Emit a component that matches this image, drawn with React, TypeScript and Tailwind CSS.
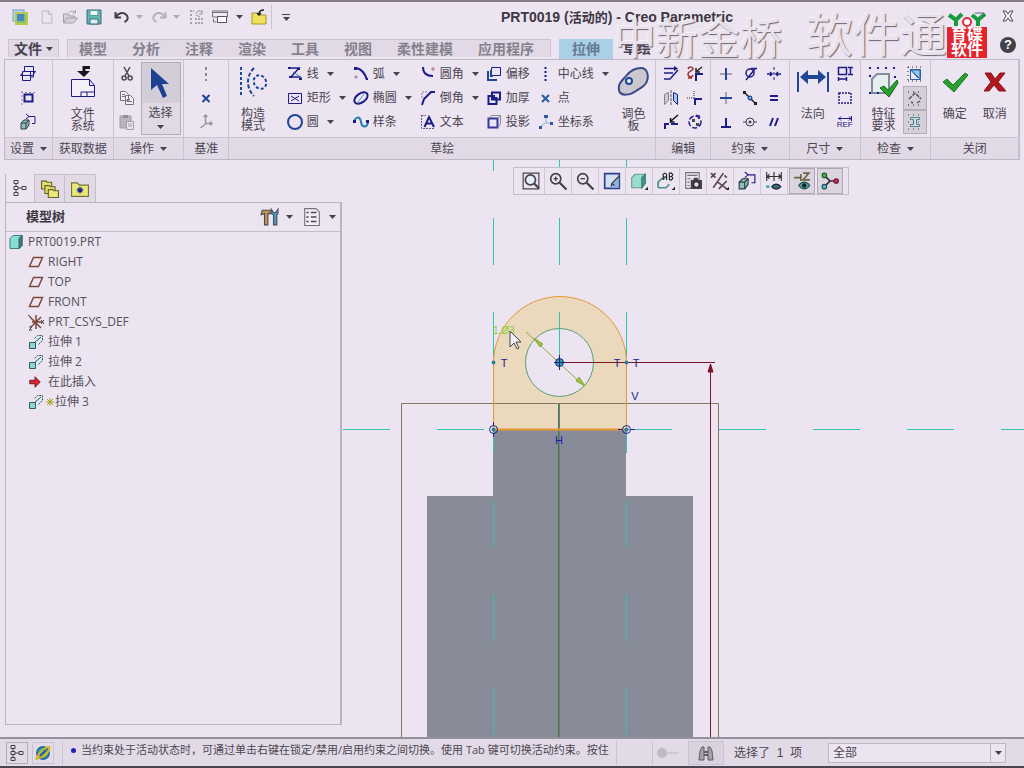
import React from "react";

const NAVY = "#1c1c86";
const BLUE = "#1f4796";

// Small line icons, all on a 16x16 grid
const icons: Record<string, React.ReactNode> = {
  app: (
    <>
      <rect x="1" y="1" width="11" height="11" fill="#b9d6ee" stroke="#6fa0c4" />
      <path d="M4 4h11v11H4z" fill="#7cc36a" stroke="#b9c94a" strokeWidth="2" />
      <path d="M5 5h7v7H5z" fill="#4a86c8" stroke="none" />
    </>
  ),
  newDoc: <path d="M2.500 1h7l4 4v10h-11zM9.500 1v4h4" stroke="#b9b3c0" />,
  open: (
    <>
      <path d="M1.500 14V5h5l1 2h5v2M1.500 14l3-5h11l-4 5z" fill="#d6d1da" stroke="#a49eab" />
      <path d="M7 3.500c2-2 4-2 6 0M13.500 1v3h-3" stroke="#a49eab" />
    </>
  ),
  save: (
    <>
      <path d="M1 1h14v14H1z" fill="#63b5ae" stroke="#3d6f7c" />
      <path d="M4 1.500h8v5H4z" fill="#e9f5f5" stroke="#5b9a9c" />
      <path d="M4 10h8v5H4z" fill="#dfeeee" stroke="#3d6f7c" />
    </>
  ),
  undo: <path d="M1.500 3v5.500h5.500M2 8c2-4 7-5 10-2.500s2 6-1.500 7.500" stroke="#3f3b49" strokeWidth="2" />,
  redo: <path d="M14.500 3v5.500H9M14 8C12 4 7 3 4 5.500s-2 6 1.500 7.500" stroke="#b5afbc" strokeWidth="2" />,
  regen: (
    <>
      <path d="M2 2h4M2 6h3M2 10h3M2 14h3M7 10h8M7 14h8" stroke="#aaa4b2" strokeWidth="2" strokeDasharray="2 1" />
      <path d="M8 5c1-4 5-4 6-1M14 1v4h-3M8 6l4 2" stroke="#9a94a2" />
    </>
  ),
  windows: (
    <>
      <path d="M.500 2h15v6h-15zM.500 3.500h15" fill="#efe9f2" stroke="#77727f" />
      <path d="M5.500 7.500h9v6h-9z" fill="#fff" stroke="#55505f" />
      <path d="M1.500 10v3h3" stroke="#77727f" />
    </>
  ),
  closeFolder: (
    <>
      <path d="M1 15V4h5l1 2h8v9z" fill="#efe05e" stroke="#a3952f" />
      <path d="M8 5c0-3 2-4 5-4M6 4l2 2 2-2" stroke="#222" strokeWidth="1.500" />
    </>
  ),
  plane: (
    <path d="M4.500 5V.500h9V11h-3M2.500 5.500h8v9h-8zM.500 9.500l3-4h12l-3 4z" />
  ),
  refFrame: (
    <>
      <path d="M4.500 4.500h8v7h-8z" strokeWidth="2" />
      <path d="M2 1v14M1 2.500h14" stroke="#85808e" strokeDasharray="2 2" />
    </>
  ),
  sketchView: (
    <>
      <path d="M8 2.500h7v7h-3M6 5l3-2.500L6 0M12 9.500h3" />
      <path d="M1 9l3-3h5v5l-3 4H1z" fill="#8fc0b8" stroke="#2b3d48" />
      <path d="M1 9h5v6M6 9l3-3" stroke="#2b3d48" />
    </>
  ),
  cut: <path d="M5 1l5 9M11 1L6 10M5 10a2 2 0 1 0 .1 4 2 2 0 0 0 0-4M11 10a2 2 0 1 0 .1 4 2 2 0 0 0 0-4" stroke="#4a4653" strokeWidth="1.500" />,
  copy: (
    <path d="M1.500 1.500h5l3 3v6h-8zM6.500 5.500h5l3 3v6h-8zM3 4.500h3M3 6.500h3M8 9.500h3M8 11.500h5" fill="#f3eef6" stroke="#77727f" />
  ),
  paste: (
    <>
      <path d="M1 2h11v12H1z" fill="#bab4c0" stroke="#a29ca9" />
      <path d="M4 1h5v3H4z" fill="#918b98" stroke="none" />
      <path d="M7.500 7.500h7v8h-7zM9 10h4M9 12h4" fill="#eae5ee" stroke="#a29ca9" />
    </>
  ),
  datumAxis: <path d="M8 1v14" stroke="#8d8896" strokeWidth="2" strokeDasharray="3 3" />,
  datumPoint: <path d="M4.500 5l7 7M11.500 5l-7 7" stroke={BLUE} strokeWidth="2" />,
  datumCsys: <path d="M7.500 1v9l-5 4M7.500 9.500H14M5.500 3l2-2 2 2M12 7.500l2 2-2 2" stroke="#9b95a3" strokeWidth="1.500" />,
  line: (
    <>
      <path d="M2 2h10L4 11h10" strokeWidth="1.500" />
      <path d="M1 1h3v2H1zM10 2h3v2h-3zM2 10h3v2H2zM12 12h3v2h-3z" fill={NAVY} stroke="none" />
      <path d="M6 6l9 6" stroke="#4b74b4" />
    </>
  ),
  rect: <path d="M1.500 3.500h13v10h-13zM4 6l8 5M12 6l-8 5" />,
  circle: <circle cx="8" cy="8" r="7" stroke={BLUE} strokeWidth="2" />,
  arc: (
    <>
      <path d="M3 2c6 1 9 5 11 12" strokeWidth="2" />
      <path d="M1 1h3v3H1zM13 12h2v2h-2z" fill={NAVY} stroke="none" />
      <path d="M1 11h4M3 9v4" stroke="#8d8896" />
    </>
  ),
  ellipse: (
    <>
      <ellipse cx="8" cy="8" rx="7.500" ry="4.500" transform="rotate(-35 8 8)" strokeWidth="2" />
      <path d="M5 12l6-8" stroke="#39a9cf" />
    </>
  ),
  spline: (
    <>
      <path d="M1 9c1-7 6-7 7-1s6 6 7 0" stroke="#217ea8" strokeWidth="2" />
      <path d="M0 6h3v3H0zM13 6h3v3h-3z" fill={NAVY} stroke="none" />
    </>
  ),
  fillet: (
    <>
      <path d="M3 1c0 6 3 9 10 9" strokeWidth="2" />
      <path d="M11 3h4M13 1v4" stroke="#b3707a" />
    </>
  ),
  chamfer: (
    <>
      <path d="M2 15l2-6 7-7h4" strokeWidth="2" />
      <path d="M2 8V2h6" stroke="#918b99" strokeDasharray="2 1" />
    </>
  ),
  textTool: (
    <>
      <path d="M4.500 13L9 3l5 10M6.500 9.500h5" strokeWidth="2" />
      <path d="M1.500 1v13.500H15M1.500 1.500H6" stroke="#605b87" strokeDasharray="2 1" />
    </>
  ),
  offset: (
    <>
      <path d="M5.500 1.500h9v8h-9z" />
      <path d="M2 5v9h9M5 4v6h2" stroke={BLUE} strokeWidth="2" />
    </>
  ),
  thicken: (
    <>
      <path d="M6 2.500h8v7H6z" strokeWidth="2" />
      <path d="M2.500 6v8h8V8H8V6z" strokeWidth="2" />
    </>
  ),
  project: (
    <>
      <path d="M2.500 4.500h9v9h-9z" strokeWidth="2" stroke="#35359a" />
      <path d="M2.500 4.500l3-3h9v9l-3 3M11.500 4.500l3-3" stroke="#8d8896" />
    </>
  ),
  centerline: <path d="M7.500 1v14" strokeWidth="2" strokeDasharray="2 2" />,
  point: <path d="M4 5l7 7M11 5l-7 7" stroke="#1e5f9d" strokeWidth="2" />,
  csys: (
    <>
      <path d="M8 2v7M7 9l-5 4M8 9h6" stroke="#8eb5d2" />
      <path d="M6 1h4v3H6zM1 12h3v3H1zM12 8h3v3h-3z" fill="#35579f" stroke="none" />
    </>
  ),
  modify: (
    <>
      <path d="M1 2.500h11M1 7h9M1 13h6l8-9" strokeWidth="1.500" />
      <path d="M11 0l4 2.500-4 2.500" fill={NAVY} stroke="none" />
    </>
  ),
  deleteSeg: (
    <>
      <path d="M1 3c1-3 5-2 5 0S1 5 1 8s4 4 5 1M1 12h4" stroke="#a02f2f" strokeWidth="1.500" />
      <path d="M9 15V8h7" strokeWidth="2" />
      <path d="M15 1l-5 4M9 2v4h4" stroke="#222" strokeWidth="1.500" />
    </>
  ),
  mirror: (
    <>
      <path d="M1.500 4.500l4-2v8l-4 4z" fill="#cfcad5" stroke="#85808e" />
      <path d="M8 0v16" stroke="#555" strokeDasharray="3 1" />
      <path d="M14.500 4.500l-4-2v8l4 4z" fill="#9fd0e6" stroke={NAVY} />
    </>
  ),
  corner: (
    <>
      <path d="M15 9H8v6" strokeWidth="2" />
      <path d="M7 1v7M0 8h7" stroke="#8d8896" strokeWidth="2" strokeDasharray="1 1" />
    </>
  ),
  divide: (
    <>
      <path d="M2 15v-5h4M8 10h7" strokeWidth="2" />
      <path d="M15 1L8 7M7.500 4v4h4" stroke="#111" strokeWidth="1.500" />
    </>
  ),
  rotateResize: (
    <>
      <circle cx="8" cy="8" r="6" strokeDasharray="5 2" strokeWidth="1.500" />
      <path d="M5 5h3v3H5zM9 9h3v3H9z" fill="#4a4653" stroke="none" />
      <path d="M9 1l4 1-2 3" />
    </>
  ),
  vertical: (
    <>
      <path d="M2 8h12" stroke="#a8a2b0" strokeWidth="2" />
      <path d="M8 2v12" stroke={BLUE} strokeWidth="2" />
    </>
  ),
  horizontal: (
    <>
      <path d="M8 2v12" stroke="#a8a2b0" strokeWidth="2" />
      <path d="M2 8h12" stroke={BLUE} strokeWidth="2" />
    </>
  ),
  perpendicular: <path d="M3 13h10M8 4v9" strokeWidth="2" />,
  tangent: (
    <>
      <circle cx="8" cy="7" r="4" strokeWidth="1.500" />
      <path d="M4 14L13 3M9 2.500h6" strokeWidth="1.500" />
    </>
  ),
  midpoint: (
    <>
      <path d="M2 2l12 12" stroke="#222" strokeWidth="1.500" />
      <path d="M1 1h3v3H1zM12 12h3v3h-3z" fill="#222" stroke="none" />
      <circle cx="8" cy="8" r="2" fill="#49c0d8" />
    </>
  ),
  coincident: (
    <>
      <circle cx="8" cy="8" r="4" stroke="#3a3a60" />
      <path d="M1 8h3M12 8h3" stroke="#3a3a60" />
      <circle cx="8" cy="8" r="1" fill="#333" stroke="#333" />
    </>
  ),
  symmetric: (
    <>
      <path d="M8 1v14" strokeDasharray="3 2" />
      <path d="M1 8h5M15 8h-5M4 6l2 2-2 2M12 6l-2 2 2 2" strokeWidth="1.500" />
    </>
  ),
  equal: <path d="M4 6h8M4 10h8" strokeWidth="2" />,
  parallel: <path d="M4 12l3-8M9 12l3-8" strokeWidth="2" />,
  perimeter: (
    <>
      <path d="M1.500 1.500h8v7h-8z" strokeWidth="1.500" />
      <path d="M11 1.500h5M11 8.500h5M13.500 2v6M1.500 11v4M9.500 11v4M2 13h7" strokeWidth="1.500" />
    </>
  ),
  baseline: <path d="M2 3h12v10H2z" strokeDasharray="2 1" strokeWidth="1.500" />,
  showDims: (
    <>
      <path d="M3 3l8 9M3.500 13.500h10v-10h-10z" stroke="#2c5fa0" />
      <path d="M4 4h9v9z" fill="#8fc7ea" stroke="#2c5fa0" />
      <path d="M1 1v14M1 1h14M1 15h14" stroke="#222" strokeDasharray="1 3" />
    </>
  ),
  openEnds: (
    <>
      <path d="M2 9l6-6 6 6M4 12l2 1M10 13l3-2" stroke="#55505f" strokeWidth="1.500" strokeDasharray="4 1" />
      <path d="M1 2h14M1 15h14" stroke="#222" strokeDasharray="1 4" />
    </>
  ),
  overlap: (
    <>
      <path d="M3.500 3.500h9v2h-3v5h3v2h-9v-2h3v-5h-3z" fill="#cfe3e4" stroke="#52808c" />
      <path d="M1 1h14M1 15h14M1 8h14" stroke="#444" strokeDasharray="1 4" />
    </>
  ),
  tree: (
    <path d="M2 .500h4v3H2zM2 6.500h4v3H2zM2 12.500h4v3H2zM10 6.500h4v3h-4zM4 3.500v3M4 9.500v3M6 8h4" stroke="#44404c" />
  ),
  folders: (
    <>
      <path d="M.500 8V1h4l1 1h4v6z" fill="#e4e06c" stroke="#67622c" />
      <path d="M3.500 12V5h4l1 1h4v6z" fill="#e4e06c" stroke="#67622c" />
      <path d="M6.500 15.500v-7h4l1 1h4v6z" fill="#ece978" stroke="#67622c" />
    </>
  ),
  favorites: (
    <>
      <path d="M.500 14.500v-12h5l2 2h8v10z" fill="#ebe87a" stroke="#77723a" />
      <path d="M8 6v6M5 9h6M6 7l4 4M10 7l-4 4" stroke="#1b1b88" />
    </>
  ),
  tools: (
    <>
      <path d="M2 2h7v3H7v10H4V5L1 6z" fill="#c9925d" stroke="#4a4a4a" />
      <path d="M10 1v4l2 1v9h3V6l1-1V1l-2 3h-2z" fill="#4f93c3" stroke="#4a5560" />
    </>
  ),
  list: (
    <>
      <path d="M1.500 .500h10l3 3v12h-13z" fill="#f2edf4" stroke="#77727f" />
      <path d="M3 4h2M3 8h2M3 12h2M7 4h5M7 8h5M7 12h5" stroke="#4b4753" strokeWidth="1.500" />
    </>
  ),
  part: (
    <>
      <path d="M2 4.500l3-3h9v10l-3 3H2z" fill="#86ded4" stroke="#3c7f7d" />
      <path d="M11 4.500l3-3v10l-3 3z" fill="#3e7f82" stroke="#2f5d63" />
    </>
  ),
  datumPlane: <path d="M1.500 12.500l4-9h9l-4 9z" stroke="#7c4a3d" strokeWidth="1.500" />,
  csysTree: (
    <>
      <path d="M8 1v14M2 3l11 11M13 3L3 13M4 8h11" stroke="#7c4a3d" strokeWidth="1.500" />
      <path d="M0 1l3 2M13 6l3 4M16 6l-3 4M1 13h3l-3 3h3" stroke="#444" />
    </>
  ),
  extrude: (
    <>
      <path d="M6.500 4.500l3-3h5v5l-4 4" fill="#d5edf2" stroke="#3a4654" strokeDasharray="2 1" />
      <path d="M1.500 8.500h6v6h-6z" fill="#8cd7d3" stroke="#2d5c63" />
      <path d="M6 9l7-6" stroke="#3a4654" />
    </>
  ),
  insert: <path d="M2 6h6V2l6 6-6 6v-4H2z" fill="#e0232f" stroke="#5b1720" />,
  refit: (
    <>
      <path d="M1 1h14v14H1z" stroke="#44404c" />
      <circle cx="7.500" cy="7" r="4.500" fill="#e3eef6" stroke="#44404c" strokeWidth="1.500" />
      <path d="M11 10.500l4 4" stroke="#44404c" strokeWidth="2" />
    </>
  ),
  zoomIn: (
    <>
      <circle cx="6" cy="6" r="4.500" stroke="#44404c" strokeWidth="1.500" />
      <path d="M9.500 9.500l6 6" stroke="#44404c" strokeWidth="2" />
      <path d="M4 6h4M6 4v4" stroke="#26222e" />
    </>
  ),
  zoomOut: (
    <>
      <circle cx="6" cy="6" r="4.500" stroke="#44404c" strokeWidth="1.500" />
      <path d="M9.500 9.500l6 6" stroke="#44404c" strokeWidth="2" />
      <path d="M4 6h4" stroke="#26222e" />
    </>
  ),
  repaint: (
    <>
      <path d="M1.500 1.500h13v13h-13z" fill="#cfe0f0" stroke="#2f3f8d" strokeWidth="1.500" />
      <path d="M7 14l1-3 6-6v9z" fill="#8fb2dc" stroke="none" />
      <path d="M7 13l1-3 6-6M8 10l2 2" stroke="#333" />
    </>
  ),
  display: (
    <>
      <path d="M1.500 5l3-3h9v8l-3 4h-9z" fill="#9adccd" stroke="#6a9c98" />
      <path d="M10.500 5l3-3v8l-3 4z" fill="#3f9c8e" stroke="#3b7b78" />
      <path d="M16 13v3h-3z" fill="#222" stroke="none" />
    </>
  ),
  savedViews: (
    <>
      <path d="M1 14V9l3-3h3M1 14h7l3-3" stroke="#4d8f8c" strokeWidth="1.500" />
      <path d="M5.500 7V2l1.500-1 1.500 1v5M5.500 4.500h3M11 7V1h2l1 1.500-1 1.500h-2M13 4l1 1.500L13 7h-2" stroke="#222" />
      <path d="M16 13v3h-3z" fill="#222" stroke="none" />
    </>
  ),
  viewManager: (
    <>
      <path d="M1.500 .500h12v14h-12zM3 3h9M3 6h3M3 9h2M3 12h2" stroke="#77727f" />
      <path d="M6 7h2l1-2h3l1 2h3v8H6z" fill="#44404c" stroke="none" />
      <circle cx="11" cy="11" r="2.500" fill="#ddd" stroke="#222" />
    </>
  ),
  datumFilter: (
    <>
      <path d="M0 1l4 4M4 1L0 5M2 14L11 1M6 9l8 6M14 8l-7 7M12 3l2 2" stroke="#5b4550" strokeWidth="1.500" />
      <path d="M16 13v3h-3z" fill="#222" stroke="none" />
    </>
  ),
  dimFilter: (
    <>
      <path d="M1.500 0v8M8 0v8M14.500 0v8M2 4h12M4 2L2 4l2 2M12 2l2 2-2 2" stroke="#333" />
      <path d="M1 13h3" stroke="#2fa3b4" strokeWidth="2" />
      <path d="M6 13c2-3 6-3 8 0-2 3-6 3-8 0z" fill="#2f6f78" stroke="#223" />
    </>
  ),
  annotations: (
    <>
      <path d="M1 5h6M9 1h5L9 7h6M7 2v6" stroke="#6c6544" strokeWidth="1.500" />
      <path d="M5 12c3-4 7-4 10 0-3 4-7 4-10 0z" fill="#58a49b" stroke="#24524f" />
      <circle cx="10" cy="12" r="2" fill="#123" stroke="none" />
    </>
  ),
  spin: (
    <>
      <path d="M3 3l5 5-5 5M8 8h6" stroke="#333" strokeWidth="1.500" />
      <circle cx="3" cy="3" r="2" fill="#3dbb4a" stroke="#1d5b25" />
      <circle cx="3" cy="13" r="2" fill="#4fc4d8" stroke="#1d4b5b" />
      <circle cx="13.500" cy="8" r="2" fill="#d22f5a" stroke="#6b1230" />
    </>
  ),
  browser: (
    <>
      <circle cx="8" cy="8" r="6" fill="#3fae7b" stroke="#2a6aa8" strokeWidth="2" />
      <path d="M3 13c-4 4 0-4 5-8s8-4 6 0-6 7-11 8z" fill="none" stroke="#d8b72c" strokeWidth="2" />
      <path d="M5 11l6-6" stroke="#2358b0" strokeWidth="2" />
    </>
  ),
  binoculars: (
    <>
      <path d="M1 15l1-9 2-4h2v13zM15 15l-1-9-2-4h-2v13z" fill="#a7a1ad" stroke="#5f5a66" />
      <path d="M6 7h4M6 10h4" stroke="#5f5a66" strokeWidth="2" />
    </>
  ),
};

const sizes = {
  sm: "h-3.5 w-3.5",
  md: "h-4 w-4",
  lg: "h-[18px] w-[18px]",
};

const Icon = ({ name, size = "md" }: { name: string; size?: "sm" | "md" | "lg" }) => (
  <svg
    viewBox="0 0 16 16"
    fill="none"
    stroke={NAVY}
    className={`${sizes[size]} shrink-0 overflow-visible`}
    aria-hidden="true"
  >
    {icons[name]}
  </svg>
);

const Caret = ({ light = false }: { light?: boolean }) => (
  <svg viewBox="0 0 7 4" className="h-1 w-[7px] shrink-0" aria-hidden="true">
    <path d="M0 0h7L3.500 4z" fill={light ? "#b0aab8" : "#45404d"} />
  </svg>
);

const IconButton = ({ name, label }: { name: string; label: string }) => (
  <button aria-label={label} className="flex h-6 items-center justify-center">
    <Icon name={name} />
  </button>
);

const IconColumn = ({ items, width }: { items: string[]; width: string }) => (
  <div className={`flex flex-col pt-0.5 ${width}`}>
    {items.map((name) => (
      <IconButton key={name} name={name} label={name} />
    ))}
  </div>
);

const BigButton = ({
  lines,
  children,
  width,
}: {
  lines: string[];
  children: React.ReactNode;
  width: string;
}) => (
  <button className={`flex flex-col items-center pt-1.5 leading-3 ${width}`}>
    <svg viewBox="0 0 32 32" fill="none" stroke={NAVY} className="mb-2.5 h-8 w-8" aria-hidden="true">
      {children}
    </svg>
    {lines.map((line) => (
      <span key={line}>{line}</span>
    ))}
  </button>
);

const Group = ({
  title,
  menu = false,
  width,
  children,
}: {
  title: string;
  menu?: boolean;
  width: string;
  children: React.ReactNode;
}) => (
  <section className={`flex flex-col border-r border-[#cbc3d1] ${width}`}>
    <div className="flex h-[77px] justify-center">{children}</div>
    <div className="flex h-[22px] items-center justify-center gap-1.5 border-t border-[#cbc3d1] bg-[#e1dae6]">
      {title}
      {menu && <Caret />}
    </div>
  </section>
);

const sketchTools = [
  {
    width: "w-[66px]",
    tools: [
      { icon: "line", label: "线", menu: true },
      { icon: "rect", label: "矩形", menu: true },
      { icon: "circle", label: "圆", menu: true },
    ],
  },
  {
    width: "w-[67px]",
    tools: [
      { icon: "arc", label: "弧", menu: true },
      { icon: "ellipse", label: "椭圆", menu: true },
      { icon: "spline", label: "样条" },
    ],
  },
  {
    width: "w-[66px]",
    tools: [
      { icon: "fillet", label: "圆角", menu: true },
      { icon: "chamfer", label: "倒角", menu: true },
      { icon: "textTool", label: "文本" },
    ],
  },
  {
    width: "w-[52px]",
    tools: [
      { icon: "offset", label: "偏移" },
      { icon: "thicken", label: "加厚" },
      { icon: "project", label: "投影" },
    ],
  },
  {
    width: "w-[74px]",
    tools: [
      { icon: "centerline", label: "中心线", menu: true },
      { icon: "point", label: "点" },
      { icon: "csys", label: "坐标系" },
    ],
  },
];

const tabs = ["模型", "分析", "注释", "渲染", "工具", "视图", "柔性建模", "应用程序"];

const treeItems = [
  { icon: "datumPlane", label: "RIGHT" },
  { icon: "datumPlane", label: "TOP" },
  { icon: "datumPlane", label: "FRONT" },
  { icon: "csysTree", label: "PRT_CSYS_DEF" },
  { icon: "extrude", label: "拉伸 1" },
  { icon: "extrude", label: "拉伸 2" },
  { icon: "insert", label: "在此插入" },
  { icon: "extrude", label: "拉伸 3", pending: true },
];

const viewTools = [
  "refit",
  "zoomIn",
  "zoomOut",
  "repaint",
  "display",
  "savedViews",
  "viewManager",
  "datumFilter",
  "sketchView",
  "dimFilter",
  "annotations",
  "spin",
];

const TitleBar = () => (
  <header className="relative flex h-[39px] items-start border-t-2 border-[#85798a] pl-3 pt-[7px]">
    <div className="flex h-4 items-center">
      <Icon name="app" />
      <div className="ml-3 flex items-center gap-2">
        <button aria-label="新建" className="flex"><Icon name="newDoc" size="sm" /></button>
        <button aria-label="打开" className="flex"><Icon name="open" /></button>
        <button aria-label="保存" className="flex"><Icon name="save" /></button>
        <button aria-label="撤消" className="ml-1 flex items-center gap-1.5"><Icon name="undo" /><Caret light /></button>
        <button aria-label="重做" className="flex items-center gap-1.5"><Icon name="redo" /><Caret light /></button>
        <button aria-label="重新生成" className="flex"><Icon name="regen" /></button>
        <button aria-label="窗口" className="flex items-center gap-2"><Icon name="windows" /><Caret /></button>
        <button aria-label="关闭文件" className="flex"><Icon name="closeFolder" /></button>
      </div>
      <div className="ml-1 h-6 border-l border-[#cbc3d1]" />
      <button aria-label="自定义" className="ml-2.5 flex flex-col items-center gap-0.5">
        <span className="w-2 border-t border-[#45404d]" />
        <Caret />
      </button>
    </div>
    <h1 className="ml-auto mr-[291px] whitespace-nowrap text-[14px] font-bold leading-4 text-[#3c3743]">
      PRT0019 (<span className="text-[13px]">活动的</span>) - Creo Parametric
    </h1>
    <button aria-label="关闭" className="absolute right-2.5 top-2">
      <svg viewBox="0 0 12 12" className="h-3 w-3" fill="#f3eef5" stroke="#55505d">
        <path d="M1 1h3l2 3 2-3h3L8 6l3 5H8L6 8l-2 3H1l3-5z" />
      </svg>
    </button>
    <button
      aria-label="帮助"
      className="absolute right-2 top-[35px] h-4 w-4 rounded-full bg-[#44404a] text-[13px] font-bold leading-4 text-white"
    >
      ?
    </button>
  </header>
);

// Embossed overlay with the vendor stamp, sits over title bar and tabs
const Watermark = () => (
  <div className="pointer-events-none absolute right-[37px] top-3 flex items-end">
    <div className="flex items-end gap-6 text-[#e9e2ed] [text-shadow:1px_1px_1px_#6b6572,-1px_-1px_0_#f6f1f8]">
      <span className="text-[42px] leading-[36px]">中新金桥</span>
      <span className="text-[47px] leading-[44px]">软件通</span>
    </div>
    <div className="w-10">
      <svg viewBox="0 0 40 15" className="h-[15px] w-10" fill="none" strokeWidth="4">
        <path d="M2 3l7 5 6-6M9 7v7M25 3l6 5 7-6M31 7v7" stroke="#189c3f" />
        <circle cx="20" cy="10" r="4" fill="#fff" stroke="#d8303a" strokeWidth="2" />
        <path d="M28 1h9v4" stroke="#5b6a78" strokeWidth="1" />
      </svg>
      <div className="h-[31px] bg-[#e3242c] text-center text-[16px] font-bold leading-[15px] text-white">
        <div>育碟</div>
        <div>软件</div>
      </div>
    </div>
  </div>
);

const RibbonTabs = () => (
  <nav className="flex h-5 items-start whitespace-nowrap text-[14px] font-bold leading-[18px] text-[#85808d]">
    <button className="ml-2 flex h-[18px] w-[51px] items-center justify-center gap-1 border border-b-0 border-[#cbc3d1] bg-[#e1dae6] text-[#46414e]">
      文件 <Caret />
    </button>
    <div className="ml-2 flex h-[18px] items-center gap-[25px] border border-b-0 border-[#cbc3d1] bg-[#e1dae6] pl-[11px] pr-4">
      {tabs.map((tab) => (
        <button key={tab}>{tab}</button>
      ))}
    </div>
    <button className="ml-2 h-5 w-[54px] bg-[#a9d0e6] text-[#64798f]">拉伸</button>
    <button className="ml-2.5 text-[#46414e]">草绘</button>
  </nav>
);

const Ribbon = () => (
  <div className="mx-1 flex border border-[#c0b8c8] text-[12px] text-[#4b4653]">
    <Group title="设置" menu width="w-12">
      <IconColumn items={["plane", "refFrame", "sketchView"]} width="w-6" />
    </Group>
    <Group title="获取数据" width="w-[61px]">
      <BigButton lines={["文件", "系统"]} width="w-14">
        <path d="M4.500 13.500h18l5 6v11h-23zM22.500 13.500v6h5M14 30v-4h13M20 26v4" stroke={NAVY} fill="#f4eef6" />
        <path d="M17 5V1.500h6" stroke="#18161c" strokeWidth="3" />
        <path d="M10 5h13l-6 6z" fill="#18161c" stroke="none" />
      </BigButton>
    </Group>
    <Group title="操作" menu width="w-[71px]">
      <IconColumn items={["cut", "copy", "paste"]} width="w-6" />
      <button className="mx-0.5 mt-0.5 flex h-[73px] w-10 flex-col items-center border border-[#b3acb9] bg-[#e1dae5] leading-3">
        <span className="flex h-10 w-full items-center justify-center bg-[#d3cdd8]">
          <svg viewBox="0 0 32 32" className="h-8 w-8" aria-hidden="true">
            <path d="M6 1v22l6-5 6 13 4-2-5-12h7z" fill="#1f4192" />
          </svg>
        </span>
        <span className="mb-1.5 mt-1">选择</span>
        <Caret />
      </button>
    </Group>
    <Group title="基准" width="w-[45px]">
      <IconColumn items={["datumAxis", "datumPoint", "datumCsys"]} width="w-6" />
    </Group>
    <Group title="草绘" width="min-w-[427px] flex-1">
      <BigButton lines={["构造", "模式"]} width="w-12">
        <path d="M4 1v30" stroke={BLUE} strokeWidth="2" strokeDasharray="3 2" />
        <path d="M17 2c-8 8-8 20 0 28" stroke={BLUE} strokeWidth="2" strokeDasharray="4 2" />
        <ellipse cx="23" cy="16" rx="6" ry="7" transform="rotate(-30 23 16)" stroke={BLUE} strokeWidth="2" strokeDasharray="3 2" />
      </BigButton>
      <div className="ml-2.5 flex pt-0.5">
        {sketchTools.map((column) => (
          <div key={column.tools[0].label} className={column.width}>
            {column.tools.map((tool) => (
              <button key={tool.label} className="flex h-6 items-center gap-1 whitespace-nowrap">
                <Icon name={tool.icon} />
                <span className="mr-1">{tool.label}</span>
                {tool.menu && <Caret />}
              </button>
            ))}
          </div>
        ))}
      </div>
      <BigButton lines={["调色", "板"]} width="w-11">
        <path
          d="M2 24C1 17 5 15 9 10S18 2 24 2s8 7 6 13-6 6-11 10S3 31 2 24z"
          fill="#cbc8d0"
          stroke="#3a4a88"
          strokeWidth="2"
        />
        <circle cx="12" cy="15" r="3" fill="#e8f0f8" stroke={BLUE} strokeWidth="2" />
      </BigButton>
    </Group>
    <Group title="编辑" width="w-[55px]">
      <IconColumn items={["modify", "mirror", "divide"]} width="w-6" />
      <IconColumn items={["deleteSeg", "corner", "rotateResize"]} width="w-6" />
    </Group>
    <Group title="约束" menu width="w-[79px]">
      <IconColumn items={["vertical", "horizontal", "perpendicular"]} width="w-6" />
      <IconColumn items={["tangent", "midpoint", "coincident"]} width="w-6" />
      <IconColumn items={["symmetric", "equal", "parallel"]} width="w-6" />
    </Group>
    <Group title="尺寸" menu width="w-[71px]">
      <BigButton lines={["法向"]} width="w-10">
        <path d="M1 6v20M31 6v20" stroke={BLUE} strokeWidth="2" />
        <path d="M3 11l8-7v5h10V4l8 7-8 7v-5H11v5z" fill={BLUE} stroke="none" />
      </BigButton>
      <div className="flex w-6 flex-col pt-0.5">
        <IconButton name="perimeter" label="周长" />
        <IconButton name="baseline" label="基线" />
        <button className="flex h-6 flex-col items-center justify-center text-[8px] leading-[8px] text-[#1c1c86]">
          <svg viewBox="0 0 14 5" className="h-[5px] w-3.5" fill="none" stroke={NAVY}>
            <path d="M0 2.500h14M3 .500l-2 2 2 2M11 .500l2 2-2 2M13.500 0v5" />
          </svg>
          REF
        </button>
      </div>
    </Group>
    <Group title="检查" menu width="w-[71px]">
      <BigButton lines={["特征", "要求"]} width="w-10">
        <path d="M5 27V13l5-5h12v15l-4 4z" fill="#e6eef0" stroke="#7d8f98" strokeWidth="2" />
        <path d="M2 2h26M2 27h12M2 10h3M28 10v3" stroke={NAVY} strokeWidth="2" strokeDasharray="2 6" />
        <path d="M13 22l4-2 4 4 9-10 1 3-9 14z" fill="#27a030" stroke="#156a1c" />
      </BigButton>
      <div className="flex w-6 flex-col pt-0.5">
        <IconButton name="showDims" label="着色封闭环" />
        <button aria-label="突出显示开放端" className="flex h-6 items-center justify-center border border-[#b3acb9] bg-[#d5cfda]">
          <Icon name="openEnds" />
        </button>
        <button aria-label="重叠几何" className="flex h-6 items-center justify-center border border-[#b3acb9] bg-[#d5cfda]">
          <Icon name="overlap" />
        </button>
      </div>
    </Group>
    <Group title="关闭" width="w-[88px]">
      <BigButton lines={["确定"]} width="w-10">
        <path d="M4 16l4-3 6 6L26 7l3 2-14 17z" fill="#27a030" stroke="#1b7a26" />
      </BigButton>
      <BigButton lines={["取消"]} width="w-10">
        <path d="M6 7h6l4 6 5-6h5l-7 9 8 9h-7l-5-6-5 6H5l7-9z" fill="#b3181f" stroke="#8a1218" />
      </BigButton>
    </Group>
  </div>
);

const ModelTree = () => (
  <aside className="flex w-[342px] shrink-0 flex-col pb-3 pl-[5px] pt-3.5">
    <div className="flex h-7 border-l border-[#c0b8c8]">
      <button aria-label="模型树" className="flex w-7 items-center justify-center">
        <Icon name="tree" />
      </button>
      <button aria-label="文件夹浏览器" className="flex w-[31px] items-center justify-center border border-b-0 border-[#c6beca] bg-[#e1dae6]">
        <Icon name="folders" size="lg" />
      </button>
      <button aria-label="收藏夹" className="flex w-[31px] items-center justify-center border border-b-0 border-l-0 border-[#c6beca] bg-[#e1dae6]">
        <Icon name="favorites" size="lg" />
      </button>
    </div>
    <div className="flex-1 border border-r-2 border-[#bbb4c2]">
      <div className="flex h-[29px] items-center border-b border-[#c3bcc9] pl-5 pr-1">
        <h2 className="text-[13px] font-bold text-[#3c3743]">模型树</h2>
        <button aria-label="设置" className="ml-auto flex items-center gap-2">
          <Icon name="tools" size="lg" />
          <Caret />
        </button>
        <button aria-label="显示" className="ml-2.5 flex items-center gap-2">
          <Icon name="list" size="lg" />
          <Caret />
        </button>
      </div>
      <div className="font-['Open_Sans','Noto_Sans_CJK_SC',sans-serif] text-[12px] text-[#55505d]">
        <div className="flex h-5 items-center gap-1 pl-0.5">
          <Icon name="part" />
          PRT0019.PRT
        </div>
        <ul>
          {treeItems.map((item) => (
            <li key={item.label} className="flex h-5 items-center pl-[22px]">
              <Icon name={item.icon} size={item.icon === "insert" ? "sm" : "md"} />
              {item.pending && (
                <svg viewBox="0 0 8 8" className="ml-0.5 h-2 w-2" stroke="#a3a01c">
                  <path d="M4 0v8M0 4h8M1 1l6 6M7 1L1 7" />
                </svg>
              )}
              <span className={item.pending ? "ml-px" : item.icon === "insert" ? "ml-1.5" : "ml-1"}>{item.label}</span>
            </li>
          ))}
        </ul>
      </div>
    </div>
  </aside>
);

// Sketch geometry, origin at the top left corner of the graphics area
const Sketch = () => (
  <svg className="absolute inset-0 h-full w-full font-['Liberation_Sans',sans-serif]" fill="none" aria-label="草绘">
    <path d="M151 270h133v66h67v2000H85V336h66z" fill="#888b98" />
    <path d="M151.500 269.500V203a66.500 66.500 0 0 1 133 0v66.500z" fill="#ead9bc" />
    <circle cx="217.500" cy="202.500" r="34" fill="#ece4f0" stroke="#5a9f78" />
    <path d="M59.500 2000V243.500h317V2000" stroke="#857663" />
    <g stroke="#2fc4b2" strokeDasharray="47 47">
      <path d="M151.500 -36v2000M217.500 -36v2000M284.500 -36v2000" />
      <path d="M1 269.500h2000" />
    </g>
    <path d="M216.500 244v2000" stroke="#6d6655" />
    <path d="M217.500 244v2000" stroke="#4f8f70" />
    <path d="M151.500 269.500V203a66.500 66.500 0 0 1 133 0v66.500" stroke="#e2983a" />
    <path d="M151 269.500h134" stroke="#e8962e" strokeWidth="2" />
    <g stroke="#7c1526">
      <path d="M218 202.500h155" />
      <path d="M368.500 204v2000" />
      <path d="M366 212l2.500-8 2.500 8z" fill="#7c1526" />
    </g>
    <g stroke="#86ac3c">
      <path d="M184 172l58 54" />
      <path d="M192 178l9 6-3 3zM243 226l-9-5 3-4z" fill="#9dc23a" />
    </g>
    <g stroke="#23238e">
      <circle cx="217.500" cy="202.500" r="4" fill="#36a393" />
      <path d="M212 202.500h11M217.500 195v15" />
      <circle cx="151.500" cy="269.500" r="4" />
      <path d="M151.500 262v4M151.500 273v4" />
      <circle cx="284.500" cy="269.500" r="4" />
      <path d="M276 269.500h4M289 269.500h4" />
    </g>
    <g fill="#2f7d96">
      <circle cx="151.500" cy="202.500" r="2" />
      <circle cx="284.500" cy="202.500" r="2" />
      <circle cx="151.500" cy="269.500" r="2" />
      <circle cx="284.500" cy="269.500" r="2" />
    </g>
    <g fill="#23238e" fontSize="11" textAnchor="middle">
      <text x="162" y="207">T</text>
      <text x="275" y="207">T</text>
      <text x="294" y="207">T</text>
      <text x="293" y="240">V</text>
      <text x="217" y="284" fill="#1a1ac0">H</text>
    </g>
    <text x="151" y="174" fill="#86d034" fontSize="10">1.Ø3</text>
    <path d="M168 171v16l4-4 3 6 2-1-3-6h5z" fill="#f5f0f7" stroke="#45404d" />
  </svg>
);

const StatusBar = () => (
  <footer className="flex h-[31px] items-center border-b-2 border-t-2 border-b-[#4a4552] border-t-[#96909e] bg-[#e2dbe7] pl-1.5 pr-[18px] text-[#4b4653]">
    <button aria-label="模型树" className="flex h-[22px] w-[22px] items-center justify-center border border-[#b3acb9]">
      <Icon name="tree" />
    </button>
    <button aria-label="浏览器" className="ml-1 flex h-[22px] w-[22px] items-center justify-center border border-[#cbc3d1]">
      <Icon name="browser" />
    </button>
    <div className="ml-2 flex h-6 flex-1 items-start gap-[5px] border-l border-r border-[#cbc3d1] pl-2 pt-px font-['Open_Sans','Noto_Sans_CJK_SC',sans-serif] text-[11px] leading-4">
      <span className="mt-1.5 h-[5px] w-[5px] shrink-0 rounded-full bg-[#2421b4]" />
      <p className="whitespace-nowrap">
        当约束处于活动状态时，可通过单击右键在锁定/禁用/启用约束之间切换。使用 Tab 键可切换活动约束。按住
      </p>
    </div>
    <div className="h-6 w-9 border-r border-[#cbc3d1]" />
    <div className="flex w-[35px] items-center pl-1">
      <span className="h-2.5 w-2.5 rounded-full bg-[#bfb9c5]" />
      <span className="h-0.5 w-3 bg-[#d0cad6]" />
    </div>
    <button aria-label="查找" className="flex h-6 w-9 items-center justify-center border border-[#cbc3d1] bg-[#d9d3df]">
      <Icon name="binoculars" />
    </button>
    <span className="ml-2.5 w-[94px] whitespace-pre text-[12px]">选择了  1  项</span>
    <div className="relative flex">
      <select
        aria-label="过滤器"
        className="h-5 w-[178px] appearance-none border border-[#bdb6c3] bg-[#ece4f0] pl-1 text-[12px]"
      >
        <option>全部</option>
      </select>
      <span className="pointer-events-none absolute inset-y-0 right-0 flex w-4 items-center justify-center border border-[#bdb6c3]">
        <Caret />
      </span>
    </div>
  </footer>
);

export default function App() {
  return (
    <div className="relative flex h-screen min-w-[1024px] flex-col overflow-hidden bg-[#ece4f0] font-['Liberation_Sans','Noto_Sans_CJK_SC',sans-serif]">
      <TitleBar />
      <RibbonTabs />
      <Watermark />
      <Ribbon />
      <div className="flex min-h-0 flex-1">
        <ModelTree />
        <main className="relative flex flex-1 flex-col items-center overflow-hidden pr-1 pt-[7px]">
          <Sketch />
          <div className="relative flex h-7 items-center border border-[#c3bcc9] bg-[#ece4f0] px-1" role="toolbar">
            {viewTools.map((name, index) => (
              <button
                key={name}
                aria-label={name}
                className={
                  index > 9
                    ? "mx-px flex h-[26px] w-[26px] items-center justify-center border border-[#aea7b5] bg-[#dcd5e0]"
                    : "flex h-[26px] w-[27px] items-center justify-center border-r border-[#d0c9d6]"
                }
              >
                <Icon name={name} size="lg" />
              </button>
            ))}
          </div>
        </main>
      </div>
      <StatusBar />
    </div>
  );
}
